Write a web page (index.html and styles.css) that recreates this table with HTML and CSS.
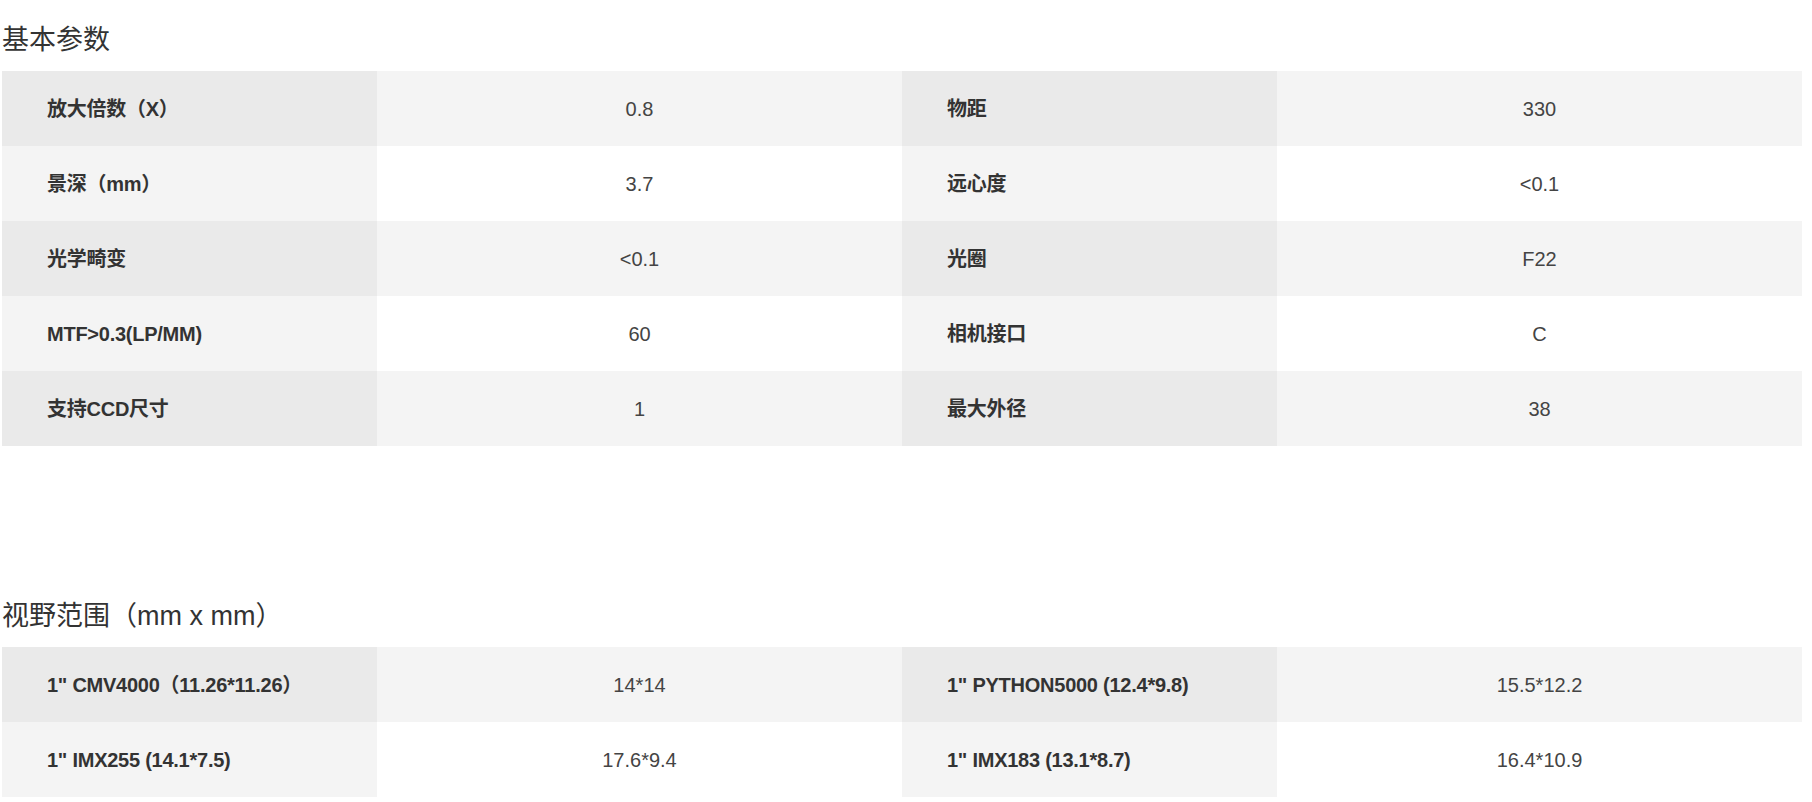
FILE: index.html
```html
<!DOCTYPE html>
<html lang="zh-CN">
<head>
<meta charset="utf-8">
<title>基本参数</title>
<link rel="stylesheet" href="styles.css">
</head>
<body>
<div class="page">
  <section class="block block-basic">
    <h2 class="block-title">基本参数</h2>
    <table class="spec">
      <colgroup>
        <col class="c-label"><col class="c-value"><col class="c-label"><col class="c-value">
      </colgroup>
      <tbody>
        <tr><th>放大倍数（X）</th><td>0.8</td><th>物距</th><td>330</td></tr>
        <tr><th>景深（mm）</th><td>3.7</td><th>远心度</th><td>&lt;0.1</td></tr>
        <tr><th>光学畸变</th><td>&lt;0.1</td><th>光圈</th><td>F22</td></tr>
        <tr><th>MTF&gt;0.3(LP/MM)</th><td>60</td><th>相机接口</th><td>C</td></tr>
        <tr><th>支持CCD尺寸</th><td>1</td><th>最大外径</th><td>38</td></tr>
      </tbody>
    </table>
  </section>
  <section class="block block-fov">
    <h2 class="block-title">视野范围（mm x mm）</h2>
    <table class="spec">
      <colgroup>
        <col class="c-label"><col class="c-value"><col class="c-label"><col class="c-value">
      </colgroup>
      <tbody>
        <tr><th>1" CMV4000（11.26*11.26）</th><td>14*14</td><th>1" PYTHON5000 (12.4*9.8)</th><td>15.5*12.2</td></tr>
        <tr><th>1" IMX255 (14.1*7.5)</th><td>17.6*9.4</td><th>1" IMX183 (13.1*8.7)</th><td>16.4*10.9</td></tr>
      </tbody>
    </table>
  </section>
</div>
</body>
</html>
```
FILE: styles.css
```css
html, body {
  margin: 0;
  padding: 0;
  background: #ffffff;
}

body {
  font-family: "Liberation Sans", "Noto Sans CJK SC", sans-serif;
  color: #333333;
}

.page {
  width: 1800px;
  padding: 0 2px;
}

.block-title {
  margin: 0;
  font-size: 27px;
  font-weight: 400;
  line-height: 40px;
  color: #333333;
}

.block-basic {
  padding-top: 20px;
}

.block-basic .block-title {
  margin-bottom: 11px;
}

.block-fov {
  margin-top: 150px;
}

.block-fov .block-title {
  margin-bottom: 11px;
}

.spec {
  width: 1800px;
  border-collapse: collapse;
  border-spacing: 0;
  table-layout: fixed;
}

.c-label {
  width: 375px;
}

.c-value {
  width: 525px;
}

.spec th,
.spec td {
  height: 75px;
  padding: 0;
  font-size: 20px;
  line-height: 24px;
  vertical-align: middle;
}

.spec th {
  padding-left: 45px;
  text-align: left;
  font-weight: 700;
  letter-spacing: -0.25px;
  color: #333333;
}

.spec td {
  text-align: center;
  font-weight: 400;
  color: #444444;
}

.spec tr:nth-child(odd) th {
  background: #eaeaea;
}

.spec tr:nth-child(odd) td {
  background: #f4f4f4;
}

.spec tr:nth-child(even) th {
  background: #f4f4f4;
}

.spec tr:nth-child(even) td {
  background: #ffffff;
}
```
